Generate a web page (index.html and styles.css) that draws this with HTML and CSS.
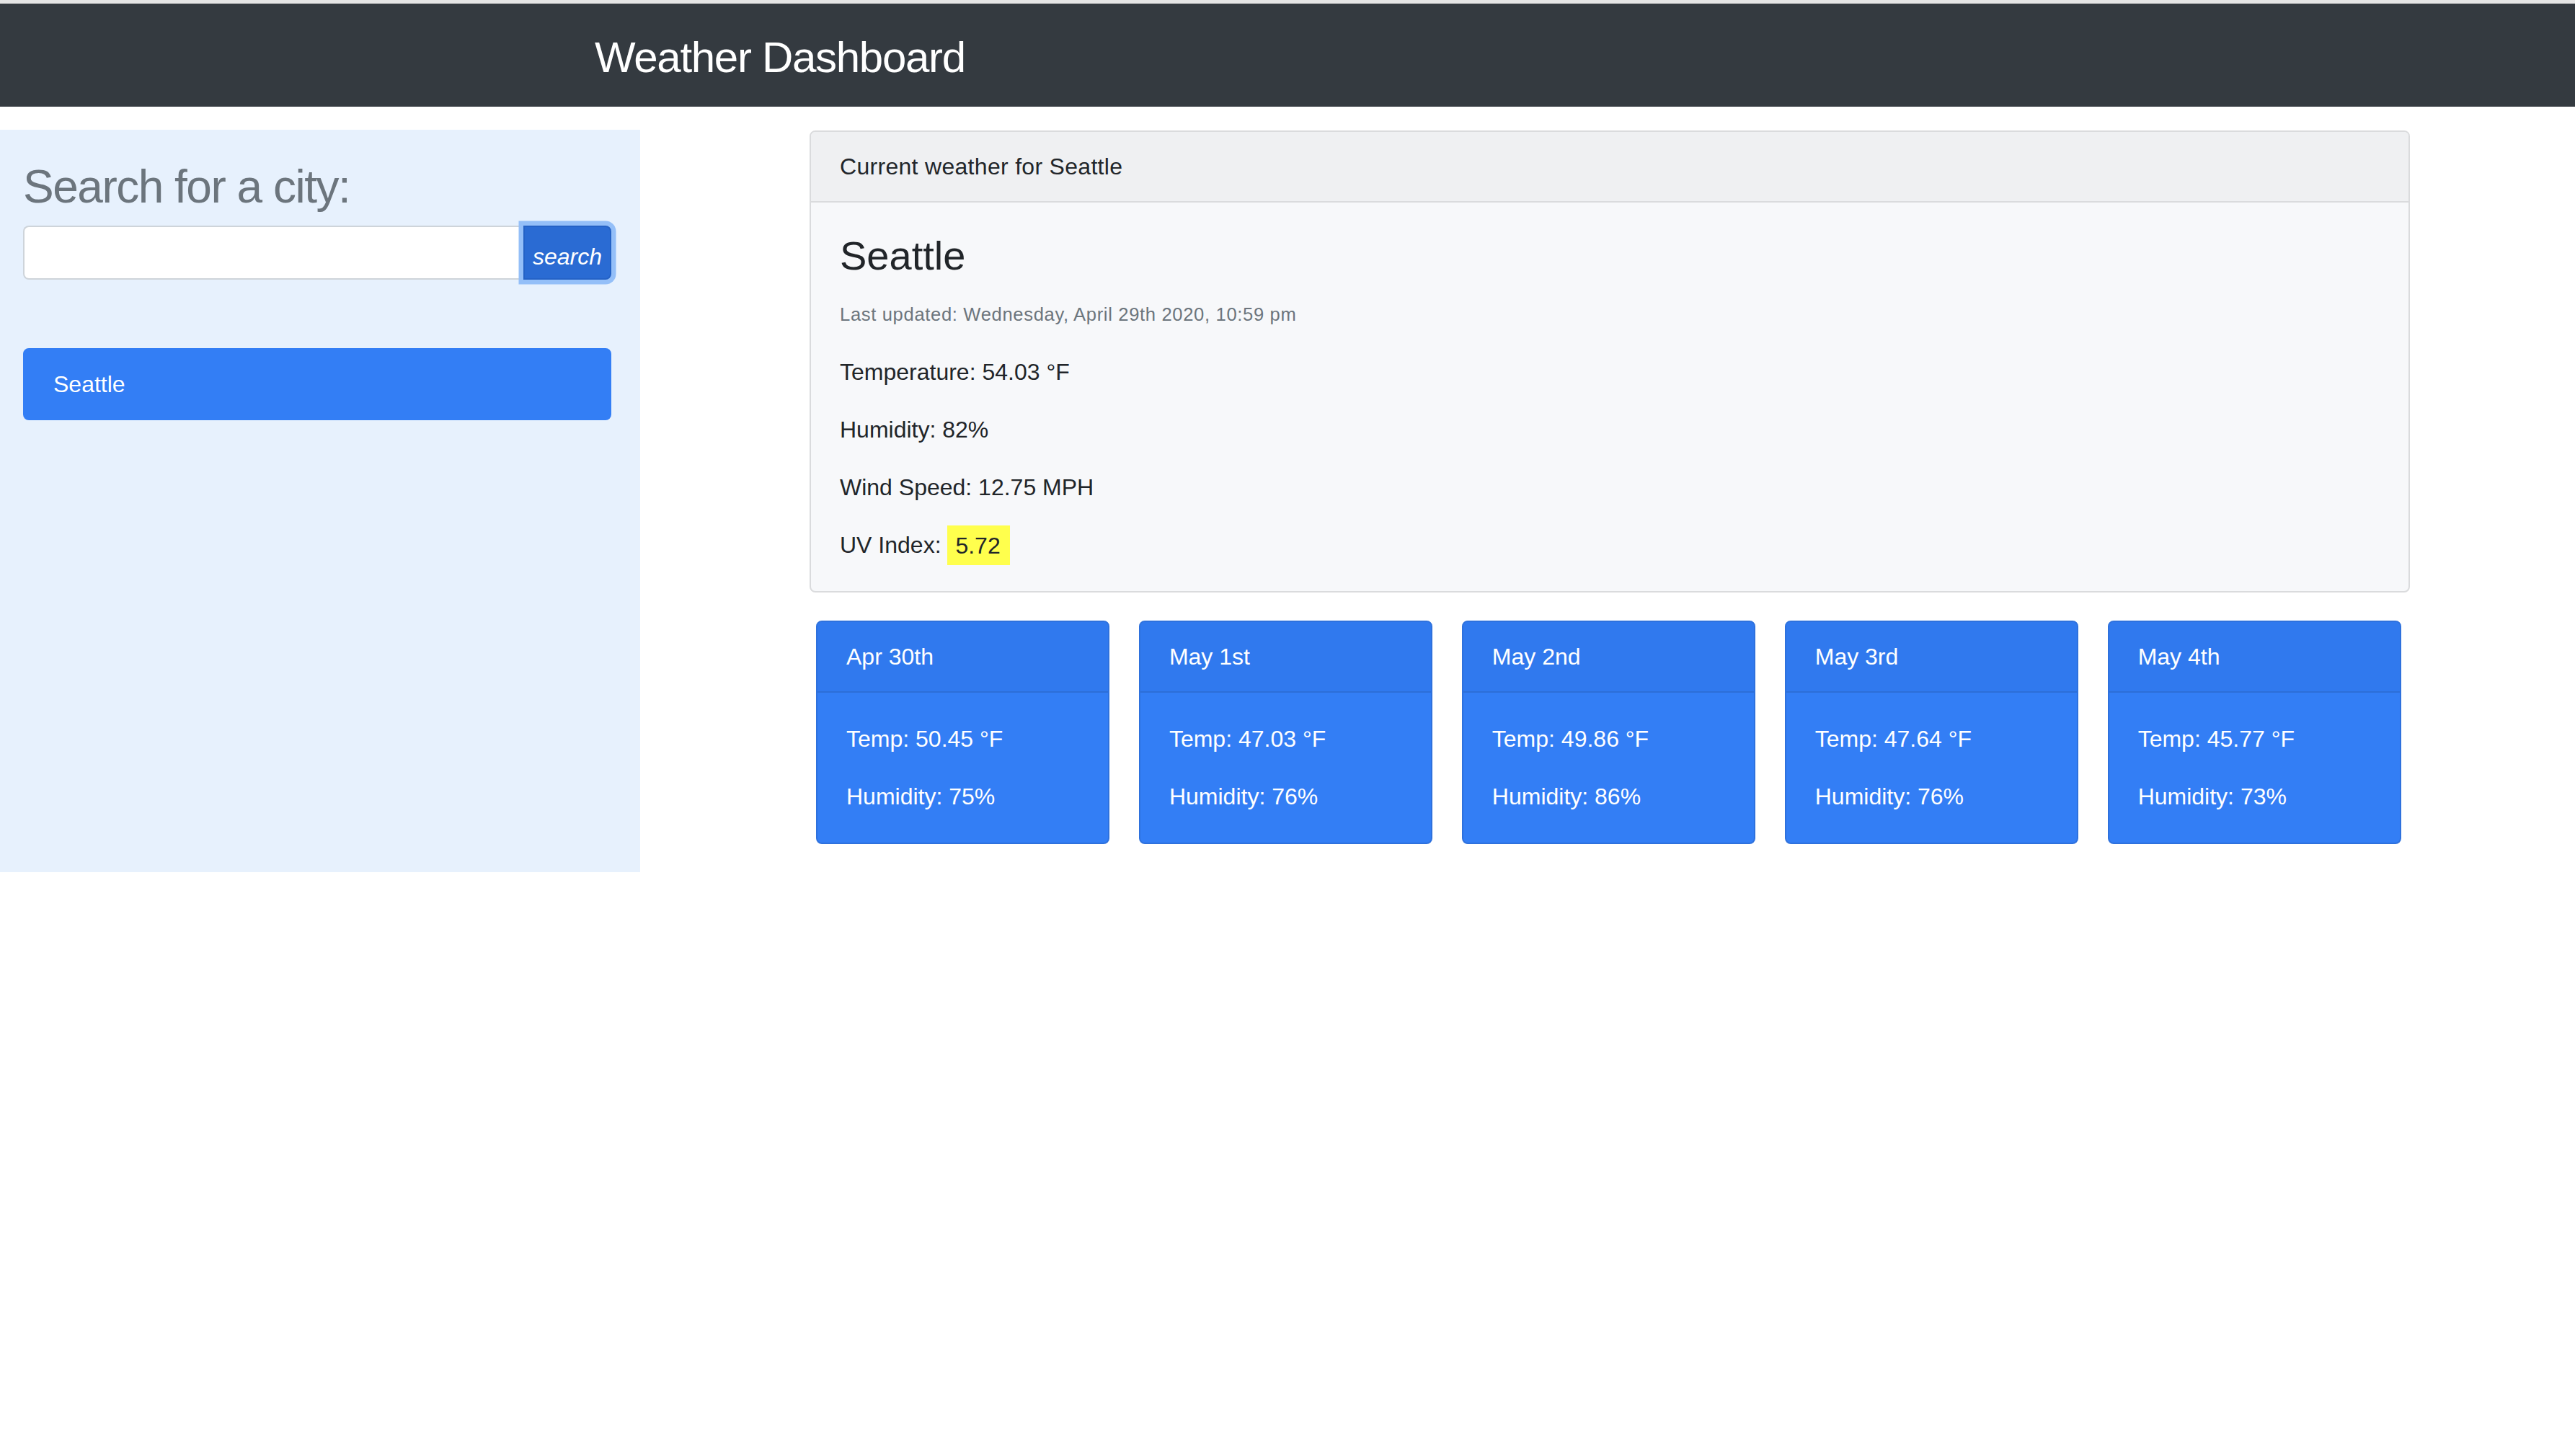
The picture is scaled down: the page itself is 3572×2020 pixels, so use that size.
FILE: index.html
```html
<!DOCTYPE html>
<html lang="en">
<head>
<meta charset="utf-8">
<title>Weather Dashboard</title>
<link rel="stylesheet" href="styles.css">
</head>
<body>
<div class="topline"></div>
<nav class="navbar">
  <h1 class="brand">Weather Dashboard</h1>
</nav>
<div class="layout">
  <aside class="sidebar">
    <h2 class="search-title">Search for a city:</h2>
    <div class="input-group">
      <input class="city-input" type="text" aria-label="City">
      <button class="search-btn" type="button"><i>search</i></button>
    </div>
    <ul class="city-list">
      <li class="city-item">Seattle</li>
    </ul>
  </aside>
  <main class="main">
    <section class="card current">
      <div class="card-header">Current weather for Seattle</div>
      <div class="card-body">
        <h3 class="city-name">Seattle</h3>
        <p class="updated">Last updated: Wednesday, April 29th 2020, 10:59 pm</p>
        <p>Temperature: 54.03 °F</p>
        <p>Humidity: 82%</p>
        <p>Wind Speed: 12.75 MPH</p>
        <p class="last">UV Index: <span class="uv">5.72</span></p>
      </div>
    </section>
    <div class="forecast">
      <div class="card fcard">
        <div class="card-header">Apr 30th</div>
        <div class="card-body">
          <p>Temp: 50.45 °F</p>
          <p class="last">Humidity: 75%</p>
        </div>
      </div>
      <div class="card fcard">
        <div class="card-header">May 1st</div>
        <div class="card-body">
          <p>Temp: 47.03 °F</p>
          <p class="last">Humidity: 76%</p>
        </div>
      </div>
      <div class="card fcard">
        <div class="card-header">May 2nd</div>
        <div class="card-body">
          <p>Temp: 49.86 °F</p>
          <p class="last">Humidity: 86%</p>
        </div>
      </div>
      <div class="card fcard">
        <div class="card-header">May 3rd</div>
        <div class="card-body">
          <p>Temp: 47.64 °F</p>
          <p class="last">Humidity: 76%</p>
        </div>
      </div>
      <div class="card fcard">
        <div class="card-header">May 4th</div>
        <div class="card-body">
          <p>Temp: 45.77 °F</p>
          <p class="last">Humidity: 73%</p>
        </div>
      </div>
    </div>
  </main>
</div>
</body>
</html>
```

FILE: styles.css
```css
* {
  box-sizing: border-box;
}

html, body {
  margin: 0;
  padding: 0;
  background: #ffffff;
}

body {
  font-family: "Liberation Sans", Arial, sans-serif;
  font-size: 32px;
  line-height: 48px;
  color: #212529;
}

.topline {
  height: 5px;
  background: #e5e5e5;
}

.navbar {
  background: #343a40;
  padding: 40px 0 34px 825px;
}

.brand {
  margin: 0;
  font-size: 60px;
  line-height: 69px;
  font-weight: 400;
  letter-spacing: -1.3px;
  color: #ffffff;
}

.layout {
  display: flex;
  align-items: flex-start;
  margin-top: 32px;
}

.sidebar {
  width: 888px;
  height: 1030px;
  flex-shrink: 0;
  background: #e7f1fd;
  padding: 41px 40px 0 32px;
}

.search-title {
  margin: 0 0 15px 0;
  font-size: 64px;
  line-height: 77px;
  font-weight: 400;
  letter-spacing: -1.5px;
  color: #6c757d;
}

.input-group {
  display: flex;
  height: 75px;
}

.city-input {
  flex: 1;
  min-width: 0;
  height: 75px;
  margin: 0;
  border: 2px solid #ced4da;
  border-right: none;
  border-radius: 8px 0 0 8px;
  background: #ffffff;
  font: inherit;
  padding: 0 24px;
  outline: none;
}

.search-btn {
  position: relative;
  z-index: 1;
  width: 122px;
  height: 75px;
  margin: 0;
  padding: 10px 0 0 0;
  border: 2px solid #2462c6;
  border-radius: 0 8px 8px 0;
  background: #2a6bd3;
  color: #ffffff;
  font-family: "Liberation Sans", Arial, sans-serif;
  font-size: 32px;
  line-height: 48px;
  box-shadow: 0 0 0 6.5px #94bff8;
}

.search-btn i {
  font-style: italic;
}

.city-list {
  list-style: none;
  margin: 95px 0 0 0;
  padding: 0;
}

.city-item {
  background: #337ef5;
  color: #ffffff;
  border: 2px solid #337ef5;
  border-radius: 8px;
  padding: 24px 40px;
  line-height: 48px;
}

.main {
  width: 2455px;
  padding-left: 235px;
  margin-top: 1px;
}

.card {
  border: 2px solid #dadbdd;
  border-radius: 8px;
  overflow: hidden;
}

.current {
  width: 2220px;
  background: #f7f8fa;
}

.current .card-header {
  background: #eff0f2;
  border-bottom: 2px solid #dadbdd;
  padding: 24px 40px;
  line-height: 48px;
  letter-spacing: 0.3px;
}

.card-body {
  padding: 40px;
}

.card-body p {
  margin: 0 0 32px 0;
  line-height: 48px;
}

.card-body p.last {
  margin-bottom: 0;
}

.city-name {
  margin: 0;
  font-size: 56px;
  line-height: 67px;
  font-weight: 400;
  color: #212529;
}

.card-body p.updated {
  margin-top: 24px;
  font-size: 25.6px;
  letter-spacing: 0.65px;
  color: #6c757d;
}

.uv {
  background: #ffff4d;
  padding: 9.5px 13px 9.5px 11px;
}

.forecast {
  display: flex;
  gap: 40.5px;
  width: 2220px;
  padding: 0 12px 0 9px;
  margin-top: 39px;
}

.fcard {
  flex: 1;
  border-color: #2e71dd;
  background: #337ef5;
  color: #ffffff;
}

.fcard .card-header {
  background: #3079ee;
  border-bottom: 2px solid #2c6ed8;
  padding: 24px 40px;
  line-height: 48px;
}
```
